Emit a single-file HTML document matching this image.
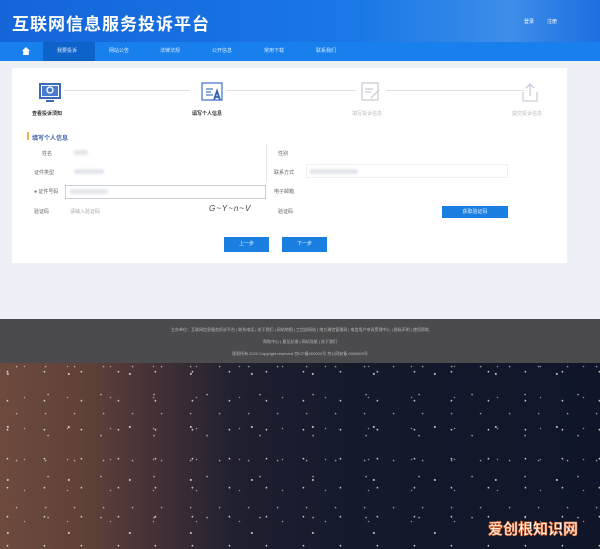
<!DOCTYPE html>
<html><head><meta charset="utf-8"><style>
*{margin:0;padding:0;box-sizing:border-box}
body{width:600px;height:549px;overflow:hidden;position:relative;font-family:"Liberation Sans","Noto Sans CJK SC",sans-serif;background:#edf0f6}
.abs{position:absolute}
#hdr{left:0;top:0;width:600px;height:42px;background:linear-gradient(90deg,#1565d8 0%,#1a78e6 60%,#3d8ee8 85%,#1d6fe0 100%)}
#hdr h1{position:absolute;left:12px;top:10px;color:#fff;font-size:17px;font-weight:bold;letter-spacing:1px}
#nav{left:0;top:42px;width:600px;height:19px;background:#1780ec}
.nt{position:absolute;top:5px;font-size:5px;color:#d8e8ff}
#card{left:12px;top:68px;width:555px;height:195px;background:#fff}
.lab{position:absolute;font-size:5px;color:#666}
.inp{position:absolute;height:14px;border:1px solid #eef0f3;background:#fff}
.blur{position:absolute;height:5px;background:#e3e6ec;border-radius:2px;filter:blur(1px)}
.btn{position:absolute;background:#1a7fe0;color:#dfeeff;font-size:5px;text-align:center}
#foot{left:0;top:319px;width:600px;height:44px;background:#4b4b4d}
.fl{position:absolute;left:0;width:600px;text-align:center;font-size:4px;color:#bbb}
#sky{left:0;top:363px;width:600px;height:186px;
background:
radial-gradient(circle at 20% 30%,rgba(255,255,255,.75) 0.5px,transparent 1.2px) 0 0/37px 29px,
radial-gradient(circle at 70% 60%,rgba(255,255,255,.6) 0.5px,transparent 1.1px) 11px 7px/53px 41px,
radial-gradient(circle at 40% 80%,rgba(255,255,255,.55) 0.5px,transparent 1.1px) 5px 13px/29px 47px,
radial-gradient(circle at 85% 15%,rgba(255,255,255,.8) 0.6px,transparent 1.3px) 17px 3px/61px 53px,
radial-gradient(circle at 50% 50%,rgba(255,255,255,.5) 0.4px,transparent 1px) 3px 19px/43px 31px,
linear-gradient(90deg,#6e4a3e 0%,#5e4038 15%,#3e2e36 28%,#1e1f2f 40%,#141a2b 60%,#10152a 100%)}
#wm{right:22px;bottom:10px;font-size:15px;color:#fff;-webkit-text-stroke:0.7px #e0703a;font-weight:bold}
</style></head><body>
<div id="hdr" class="abs"><h1>互联网信息服务投诉平台</h1>
<span style="position:absolute;left:524px;top:18px;font-size:5px;color:#fff">登录</span>
<span style="position:absolute;left:547px;top:18px;font-size:5px;color:#fff">注册</span></div>
<div id="nav" class="abs">
<div style="position:absolute;left:22px;top:5px;width:8px;height:8px;background:#fff;clip-path:polygon(50% 0,100% 50%,85% 50%,85% 100%,15% 100%,15% 50%,0 50%)"></div>
<div style="position:absolute;left:43px;top:0;width:52px;height:19px;background:#0d63c9"></div>
<span class="nt" style="left:57px">我要投诉</span><span class="nt" style="left:109px">网站公告</span><span class="nt" style="left:160px">法律法规</span><span class="nt" style="left:212px">公开信息</span><span class="nt" style="left:264px">常用下载</span><span class="nt" style="left:316px">联系我们</span>
</div>
<div id="card" class="abs">
<div class="abs" style="left:52px;top:22px;width:126px;height:1px;background:#dcdfe4"></div>
<div class="abs" style="left:214px;top:22px;width:130px;height:1px;background:#dcdfe4"></div>
<div class="abs" style="left:374px;top:22px;width:138px;height:1px;background:#dcdfe4"></div>
<svg class="abs" style="left:26px;top:13px" width="26" height="26" viewBox="0 0 26 26"><rect x="2" y="3" width="20" height="14" fill="none" stroke="#3a6ab8" stroke-width="2"/><rect x="4" y="5" width="16" height="10" fill="#4a7bd0"/><circle cx="12" cy="9" r="3" fill="none" stroke="#fff" stroke-width="1.3"/><rect x="8" y="19" width="8" height="2" fill="#3a6ab8"/></svg>
<svg class="abs" style="left:188px;top:12px" width="26" height="26" viewBox="0 0 26 26"><rect x="2" y="3" width="20" height="17" fill="none" stroke="#4a7bd0" stroke-width="1.3"/><path d="M6 9h7M6 12h5M6 15h7" stroke="#4a7bd0" stroke-width="1.2"/><path d="M14 20l3-9 3 9M15 17h4" stroke="#2f5fb0" stroke-width="1.8" fill="none"/></svg>
<svg class="abs" style="left:347px;top:12px" width="26" height="26" viewBox="0 0 26 26"><rect x="3" y="3" width="16" height="17" fill="none" stroke="#ccd" stroke-width="1.3"/><path d="M6 9h8M6 12h6M12 18l8-8" stroke="#ccd" stroke-width="1.3"/></svg>
<svg class="abs" style="left:506px;top:12px" width="26" height="26" viewBox="0 0 26 26"><path d="M5 12v9h14v-9M12 4v12M8 8l4-4 4 4" stroke="#ccd" stroke-width="1.3" fill="none"/></svg>
<span class="lab" style="left:20px;top:42px;color:#333;font-weight:bold">查看投诉须知</span>
<span class="lab" style="left:180px;top:42px;color:#333;font-weight:bold">填写个人信息</span>
<span class="lab" style="left:340px;top:42px;color:#bbb">填写投诉信息</span>
<span class="lab" style="left:500px;top:42px;color:#bbb">提交投诉信息</span>
<div class="abs" style="left:15px;top:64px;width:1.5px;height:8px;background:#e8b84a"></div>
<span class="lab" style="left:20px;top:65px;color:#3d5fa8;font-weight:bold;font-size:6px">填写个人信息</span>
<span class="lab" style="left:30px;top:82px">姓名</span><span class="lab" style="left:22px;top:101px">证件类型</span><span class="lab" style="left:22px;top:120px">● 证件号码</span><span class="lab" style="left:22px;top:140px">验证码</span>
<div class="blur" style="left:62px;top:82px;width:14px"></div>
<div class="blur" style="left:62px;top:101px;width:30px"></div>
<div class="inp" style="left:53px;top:117px;width:201px;border-color:#c9ced6"></div>
<div class="blur" style="left:58px;top:121px;width:38px"></div>
<span class="lab" style="left:58px;top:140px;color:#aaa">请输入验证码</span>
<span class="abs" style="left:197px;top:136px;font-size:8px;color:#444;font-style:italic;letter-spacing:1px">G~Y~n~V</span>
<div class="abs" style="left:254px;top:76px;width:1px;height:38px;background:#e6e8ec"></div>
<span class="lab" style="left:266px;top:82px">性别</span><span class="lab" style="left:262px;top:101px">联系方式</span><span class="lab" style="left:262px;top:120px">电子邮箱</span><span class="lab" style="left:266px;top:140px">验证码</span>
<div class="inp" style="left:294px;top:96px;width:202px"></div>
<div class="blur" style="left:298px;top:101px;width:48px"></div>
<div class="btn" style="left:430px;top:138px;width:66px;height:12px;line-height:12px">获取验证码</div>
<div class="btn" style="left:212px;top:169px;width:45px;height:15px;line-height:15px">上一步</div>
<div class="btn" style="left:270px;top:169px;width:45px;height:15px;line-height:15px">下一步</div>
</div>
<div id="foot" class="abs">
<div class="fl" style="top:8px">主办单位：互联网信息服务投诉平台 | 联系电话 | 关于我们 | 网站地图 | 工信部网站 | 地方通信管理局 | 电信用户申诉受理中心 | 隐私声明 | 使用帮助</div>
<div class="fl" style="top:20px">帮助中心 | 意见反馈 | 网站导航 | 关于我们</div>
<div class="fl" style="top:32px">版权所有 2020 Copyright reserved 京ICP备000000号 京公网安备 0000000号</div>
</div>
<div id="sky" class="abs"><div id="wm" class="abs">爱创根知识网</div></div>
</body></html>
